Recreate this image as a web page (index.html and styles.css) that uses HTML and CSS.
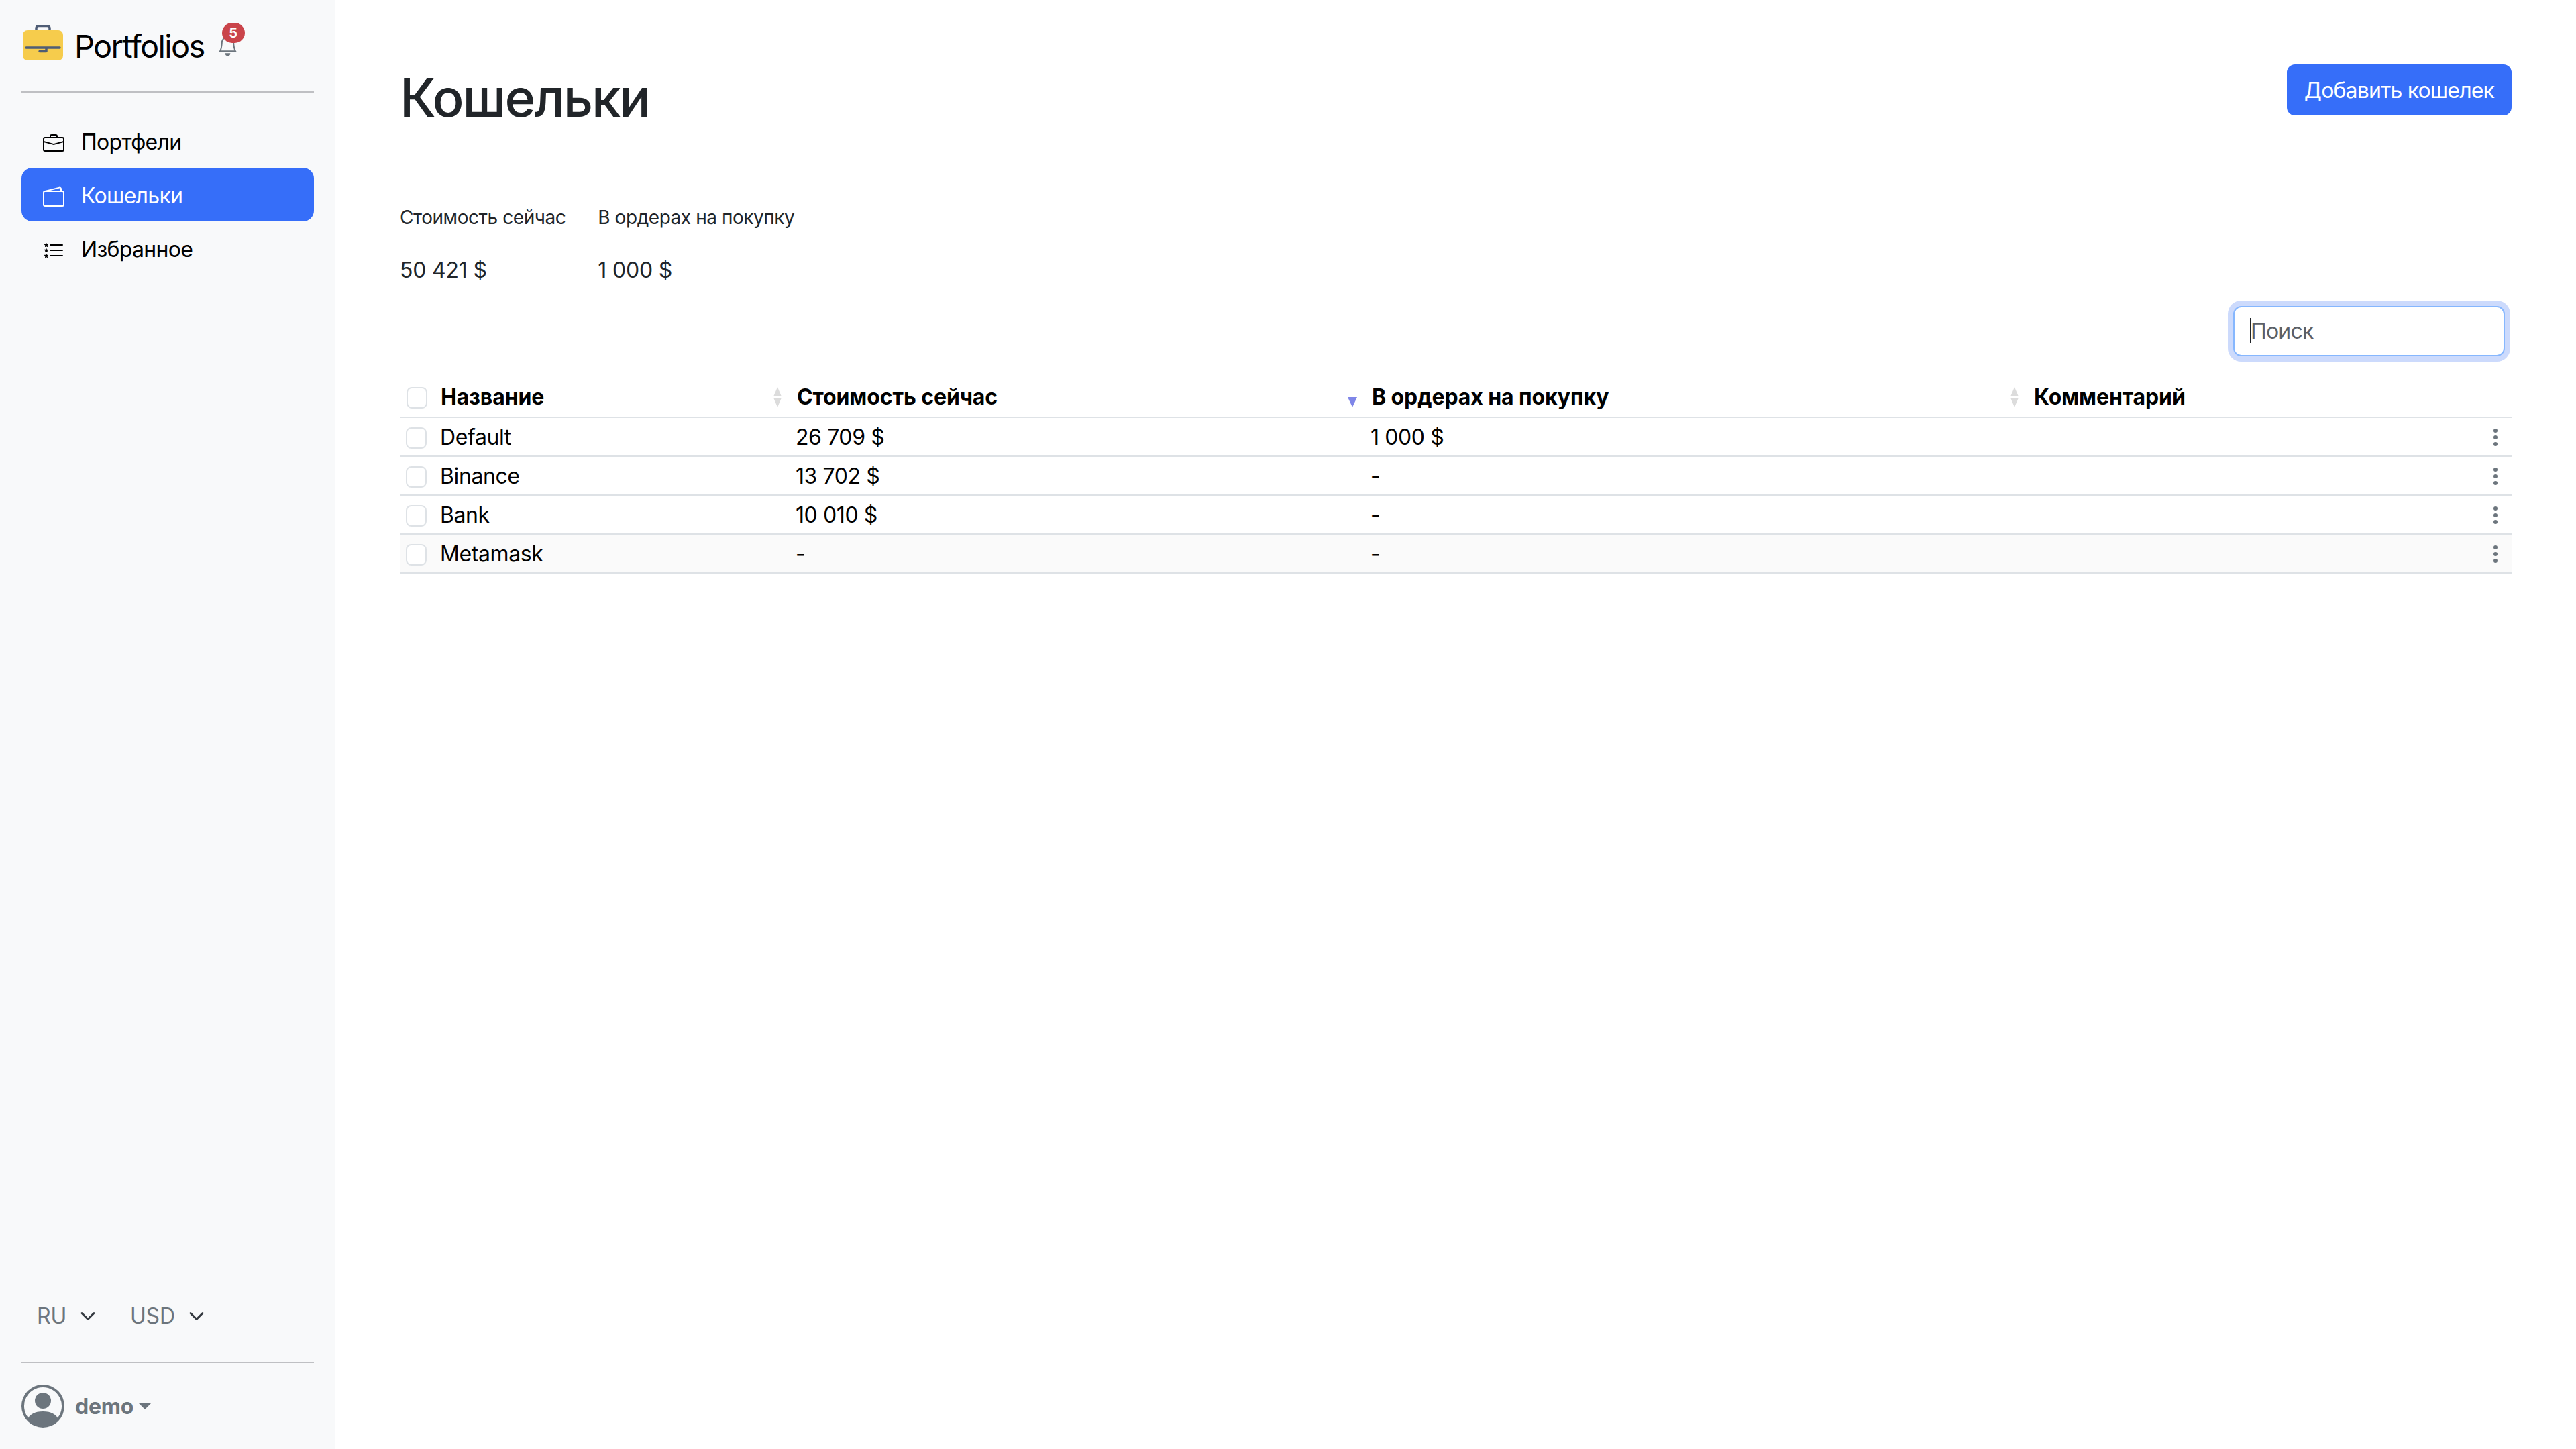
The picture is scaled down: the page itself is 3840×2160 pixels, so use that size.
FILE: index.html
```html
<!DOCTYPE html>
<html lang="ru">
<head>
  <meta charset="UTF-8" />
  <meta name="viewport" content="width=device-width, initial-scale=1.0" />
  <title>Кошельки</title>
  <link rel="stylesheet" href="styles.css">
</head>
<body>
  <aside class="sidebar">
    <div class="brand">
      <svg class="brand-logo" viewBox="0 0 60 53" aria-hidden="true">
        <path d="M20 11V5a3.500 3.500 0 0 1 3.500-3.500h13A3.500 3.500 0 0 1 40 5v6" fill="none" stroke="#4f5d75" stroke-width="3.500" stroke-linecap="round"/>
        <rect x="0" y="8" width="60" height="45" rx="7" fill="#f6cc4c"/>
        <path d="M5 34h50M35 34v5.500H25" fill="none" stroke="#4f5d75" stroke-width="3.500" stroke-linecap="round" stroke-linejoin="round"/>
      </svg>
      <span class="brand-name">Portfolios</span>
      <span class="bell">
        <svg viewBox="0 0 16 16" fill="#6c757d" aria-hidden="true"><path d="M8 16a2 2 0 0 0 2-2H6a2 2 0 0 0 2 2zM8 1.918l-.797.161A4.002 4.002 0 0 0 4 6c0 .628-.134 2.197-.459 3.742-.16.767-.376 1.566-.663 2.258h10.244c-.287-.692-.502-1.49-.663-2.258C12.134 8.197 12 6.628 12 6a4.002 4.002 0 0 0-3.203-3.92L8 1.917zM14.22 12c.223.447.481.801.78 1H1c.299-.199.557-.553.78-1C2.68 10.2 3 6.88 3 6c0-2.42 1.72-4.44 4.005-4.901a1 1 0 1 1 1.99 0A5.002 5.002 0 0 1 13 6c0 .88.32 4.2 1.22 6z"/></svg>
        <span class="badge">5</span>
      </span>
    </div>

    <nav class="nav">
      <a class="nav-item">
        <svg viewBox="0 0 16 16" fill="currentColor" aria-hidden="true"><path d="M6.500 1A1.500 1.500 0 0 0 5 2.500V3H1.500A1.500 1.500 0 0 0 0 4.500v8A1.500 1.500 0 0 0 1.500 14h13a1.500 1.500 0 0 0 1.500-1.500v-8A1.500 1.500 0 0 0 14.500 3H11v-.5A1.500 1.500 0 0 0 9.500 1h-3zm0 1h3a.5.500 0 0 1 .5.500V3H6v-.5a.5.500 0 0 1 .5-.5zm1.886 6.914L15 7.151V12.500a.5.500 0 0 1-.5.500h-13a.5.500 0 0 1-.5-.5V7.150l6.614 1.764a1.500 1.500 0 0 0 .772 0zM1.500 4h13a.5.500 0 0 1 .5.500v1.616L8.129 7.948a.5.500 0 0 1-.258 0L1 6.116V4.500a.5.500 0 0 1 .5-.5z"/></svg>
        Портфели
      </a>
      <a class="nav-item active">
        <svg viewBox="0 0 16 16" fill="currentColor" aria-hidden="true"><path d="M12.136.326A1.500 1.500 0 0 1 14 1.780V3h.5A1.500 1.500 0 0 1 16 4.500v9a1.500 1.500 0 0 1-1.500 1.500h-13A1.500 1.500 0 0 1 0 13.500v-9a1.500 1.500 0 0 1 1.432-1.499L12.136.326zM5.562 3H13V1.780a.5.500 0 0 0-.621-.484L5.562 3zM1.500 4a.5.500 0 0 0-.5.500v9a.5.500 0 0 0 .5.500h13a.5.500 0 0 0 .5-.5v-9a.5.500 0 0 0-.5-.5h-13z"/></svg>
        Кошельки
      </a>
      <a class="nav-item">
        <svg viewBox="0 0 16 16" fill="currentColor" aria-hidden="true"><path d="M5 11.500a.5.500 0 0 1 .5-.5h9a.5.500 0 0 1 0 1h-9a.5.500 0 0 1-.5-.5zm0-4a.5.500 0 0 1 .5-.5h9a.5.500 0 0 1 0 1h-9a.5.500 0 0 1-.5-.5zm0-4a.5.500 0 0 1 .5-.5h9a.5.500 0 0 1 0 1h-9a.5.500 0 0 1-.5-.5z"/><path id="star" d="M2.242 2.194a.27.27 0 0 1 .516 0l.162.530c.035.115.14.194.258.194h.551c.259 0 .37.333.164.493l-.468.363a.277.277 0 0 0-.094.300l.173.569c.078.256-.213.462-.423.300l-.417-.324a.267.267 0 0 0-.328 0l-.417.323c-.21.163-.5-.043-.423-.299l.173-.57a.277.277 0 0 0-.094-.299l-.468-.363c-.206-.16-.095-.493.164-.493h.55a.271.271 0 0 0 .259-.194l.162-.53z"/><use href="#star" y="4"/><use href="#star" y="8"/></svg>
        Избранное
      </a>
    </nav>

    <div class="sidebar-bottom">
      <div class="selects">
        <div class="select">RU <svg viewBox="0 0 16 16" aria-hidden="true"><path d="m2 5 6 6 6-6" fill="none" stroke="#343a40" stroke-width="2" stroke-linecap="round" stroke-linejoin="round"/></svg></div>
        <div class="select">USD <svg viewBox="0 0 16 16" aria-hidden="true"><path d="m2 5 6 6 6-6" fill="none" stroke="#343a40" stroke-width="2" stroke-linecap="round" stroke-linejoin="round"/></svg></div>
      </div>
      <div class="user">
        <svg viewBox="0 0 16 16" fill="#6c757d" aria-hidden="true"><path d="M11 6a3 3 0 1 1-6 0 3 3 0 0 1 6 0z"/><path fill-rule="evenodd" d="M0 8a8 8 0 1 1 16 0A8 8 0 0 1 0 8zm8-7a7 7 0 0 0-5.468 11.370C3.242 11.226 4.805 10 8 10s4.757 1.225 5.468 2.370A7 7 0 0 0 8 1z"/></svg>
        <strong>demo</strong>
        <span class="user-caret"></span>
      </div>
    </div>
  </aside>

  <main class="main">
    <div class="page-head">
      <h1>Кошельки</h1>
      <button class="btn-add">Добавить кошелек</button>
    </div>

    <div class="stats">
      <div class="stat">
        <div class="stat-label">Стоимость сейчас</div>
        <div class="stat-value">50 421 $</div>
      </div>
      <div class="stat">
        <div class="stat-label">В ордерах на покупку</div>
        <div class="stat-value">1 000 $</div>
      </div>
    </div>

    <div class="search-row">
      <div class="search">
        <input type="text" placeholder="Поиск">
        <span class="search-caret"></span>
      </div>
    </div>

    <table class="wallets">
      <colgroup>
        <col class="col-name">
        <col class="col-value">
        <col class="col-orders">
        <col>
      </colgroup>
      <thead>
        <tr>
          <th>
            <div class="th-inner">
              <span class="name-cell"><span class="check"></span>Название</span>
              <svg class="sorter" viewBox="0 0 16 30" aria-hidden="true"><path d="M8 0l6 14H2zM8 30l-6-14h12z" fill="#dcdcdc"/></svg>
            </div>
          </th>
          <th>
            <div class="th-inner">
              Стоимость сейчас
              <svg class="sorter" viewBox="0 0 16 30" aria-hidden="true"><path d="M8 30L1 15h14z" fill="#7f86e8"/></svg>
            </div>
          </th>
          <th>
            <div class="th-inner">
              В ордерах на покупку
              <svg class="sorter" viewBox="0 0 16 30" aria-hidden="true"><path d="M8 0l6 14H2zM8 30l-6-14h12z" fill="#dcdcdc"/></svg>
            </div>
          </th>
          <th><div class="th-inner">Комментарий</div></th>
        </tr>
      </thead>
      <tbody>
        <tr>
          <td><span class="name-cell"><span class="check"></span>Default</span></td>
          <td>26 709 $</td>
          <td>1 000 $</td>
          <td class="td-menu"><svg class="kebab" viewBox="0 0 16 16" fill="#6c757d" aria-hidden="true"><path d="M9.500 13a1.500 1.500 0 1 1-3 0 1.500 1.500 0 0 1 3 0zm0-5a1.500 1.500 0 1 1-3 0 1.500 1.500 0 0 1 3 0zm0-5a1.500 1.500 0 1 1-3 0 1.500 1.500 0 0 1 3 0z"/></svg></td>
        </tr>
        <tr>
          <td><span class="name-cell"><span class="check"></span>Binance</span></td>
          <td>13 702 $</td>
          <td>-</td>
          <td class="td-menu"><svg class="kebab" viewBox="0 0 16 16" fill="#6c757d" aria-hidden="true"><path d="M9.500 13a1.500 1.500 0 1 1-3 0 1.500 1.500 0 0 1 3 0zm0-5a1.500 1.500 0 1 1-3 0 1.500 1.500 0 0 1 3 0zm0-5a1.500 1.500 0 1 1-3 0 1.500 1.500 0 0 1 3 0z"/></svg></td>
        </tr>
        <tr>
          <td><span class="name-cell"><span class="check"></span>Bank</span></td>
          <td>10 010 $</td>
          <td>-</td>
          <td class="td-menu"><svg class="kebab" viewBox="0 0 16 16" fill="#6c757d" aria-hidden="true"><path d="M9.500 13a1.500 1.500 0 1 1-3 0 1.500 1.500 0 0 1 3 0zm0-5a1.500 1.500 0 1 1-3 0 1.500 1.500 0 0 1 3 0zm0-5a1.500 1.500 0 1 1-3 0 1.500 1.500 0 0 1 3 0z"/></svg></td>
        </tr>
        <tr class="hovered">
          <td><span class="name-cell"><span class="check"></span>Metamask</span></td>
          <td>-</td>
          <td>-</td>
          <td class="td-menu"><svg class="kebab" viewBox="0 0 16 16" fill="#6c757d" aria-hidden="true"><path d="M9.500 13a1.500 1.500 0 1 1-3 0 1.500 1.500 0 0 1 3 0zm0-5a1.500 1.500 0 1 1-3 0 1.500 1.500 0 0 1 3 0zm0-5a1.500 1.500 0 1 1-3 0 1.500 1.500 0 0 1 3 0z"/></svg></td>
        </tr>
      </tbody>
    </table>
  </main>
</body>
</html>
```

FILE: styles.css
```css
* {
  box-sizing: border-box;
}
body {
  margin: 0;
  height: 2160px;
  display: flex;
  font-family: Inter, "Liberation Sans", sans-serif;
  font-size: 32px;
  line-height: 48px;
  letter-spacing: -0.2px;
  color: #212529;
  background: #fff;
}

/* sidebar */
.sidebar {
  width: 500px;
  flex-shrink: 0;
  display: flex;
  flex-direction: column;
  padding: 0 32px 32px;
  background: #f8f9fa;
}
.brand {
  height: 138px;
  padding: 37px 2px 0;
  display: flex;
  align-items: flex-start;
  border-bottom: 2px solid #bfc0c3;
}
.brand-logo {
  width: 60px;
  height: 53px;
  flex-shrink: 0;
}
.brand-name {
  margin: 3px 0 0 17px;
  font-size: 47px;
  line-height: 58px;
  letter-spacing: -1.7px;
  color: #000;
}
.bell {
  position: relative;
  width: 31px;
  height: 31px;
  margin: 15px 0 0 19px;
}
.bell svg {
  display: block;
  width: 31px;
  height: 31px;
}
.badge {
  position: absolute;
  top: -18px;
  left: 7px;
  width: 34px;
  height: 30px;
  border-radius: 15px;
  background: #ca444a;
  color: #fff;
  font-size: 20px;
  font-weight: 700;
  line-height: 30px;
  text-align: center;
}
.nav {
  margin-top: 32px;
}
.nav-item {
  height: 80px;
  padding: 3px 0 0 32px;
  display: flex;
  align-items: center;
  gap: 25px;
  border-radius: 16px;
  letter-spacing: -0.7px;
  color: #000;
}
.nav-item svg {
  width: 32px;
  height: 32px;
  margin-top: 4px;
}
.nav-item.active {
  background: #366ef9;
  color: #fff;
}
.sidebar-bottom {
  margin-top: auto;
}
.selects {
  display: flex;
  padding: 0 0 44px 23px;
}
.select {
  width: 139px;
  display: flex;
  align-items: center;
  gap: 20px;
  color: #6c757d;
}
.select svg {
  width: 24px;
  height: 24px;
}
.user {
  padding-top: 32px;
  display: flex;
  align-items: center;
  border-top: 2px solid #bfc0c3;
  color: #6c757d;
}
.user svg {
  width: 64px;
  height: 64px;
  margin-right: 16px;
}
.user strong {
  padding-top: 2px;
}
.user-caret {
  margin-left: 8px;
  border-top: 9px solid #6c757d;
  border-left: 9px solid transparent;
  border-right: 9px solid transparent;
}

/* main */
.main {
  flex: 1;
  padding: 96px 96px 0;
}
.page-head {
  display: flex;
  justify-content: space-between;
  align-items: flex-start;
}
h1 {
  margin: 2px 0 0;
  font-size: 78px;
  font-weight: 500;
  line-height: 96px;
  letter-spacing: -2.1px;
}
.btn-add {
  height: 76px;
  padding: 0 26px;
  border: 0;
  border-radius: 12px;
  background: #366ef9;
  color: #fff;
  font: 32px Inter, "Liberation Sans", sans-serif;
  letter-spacing: -0.85px;
}
.stats {
  display: flex;
  gap: 48px;
  margin-top: 109px;
}
.stat-label {
  font-size: 28px;
  line-height: 42px;
  letter-spacing: -0.45px;
}
.stat-value {
  margin-top: 34px;
}
.search-row {
  display: flex;
  justify-content: flex-end;
  padding-right: 10px;
  margin-top: 29px;
}
.search {
  position: relative;
  width: 405px;
}
.search input {
  display: block;
  width: 100%;
  height: 75px;
  padding: 0 24px;
  border: 2px solid #86b7fe;
  border-radius: 12px;
  box-shadow: 0 0 0 8px #ccdafc;
  outline: none;
  font: 32px Inter, "Liberation Sans", sans-serif;
  letter-spacing: -0.8px;
  color: #212529;
  caret-color: transparent;
}
.search input::placeholder {
  color: #5c6066;
  opacity: 1;
}
.search-caret {
  position: absolute;
  top: 18px;
  left: 25px;
  width: 2px;
  height: 38px;
  background: #212529;
}

/* table */
.wallets {
  width: 100%;
  margin-top: 31px;
  table-layout: fixed;
  border-collapse: collapse;
  color: #000;
}
.col-name {
  width: 580px;
}
.col-value {
  width: 857px;
}
.col-orders {
  width: 987px;
}
.wallets th {
  height: 60px;
  padding: 0 0 0 12px;
  border-bottom: 2px solid #dee2e6;
  font-weight: 700;
  letter-spacing: -0.1px;
  text-align: left;
}
.th-inner {
  display: flex;
  align-items: center;
  justify-content: space-between;
  padding-right: 9px;
}
.sorter {
  width: 16px;
  height: 30px;
}
.wallets td {
  height: 58px;
  padding: 2px 0 0 10px;
  border-bottom: 2px solid #dee2e6;
  letter-spacing: -0.4px;
}
.name-cell {
  display: flex;
  align-items: center;
}
.check {
  width: 31px;
  height: 32px;
  margin-right: 20px;
  border: 2px solid #dee2e6;
  border-radius: 8px;
  background: #fff;
}
.wallets td .check {
  margin-top: 2px;
  margin-left: -1px;
}
.wallets th .check {
  margin-left: -2px;
  margin-top: 2px;
}
.hovered {
  background: #fafafa;
}
.td-menu {
  padding-top: 0;
  text-align: right;
}
.kebab {
  display: block;
  width: 32px;
  height: 32px;
  margin-left: auto;
  margin-right: 8px;
}
```
